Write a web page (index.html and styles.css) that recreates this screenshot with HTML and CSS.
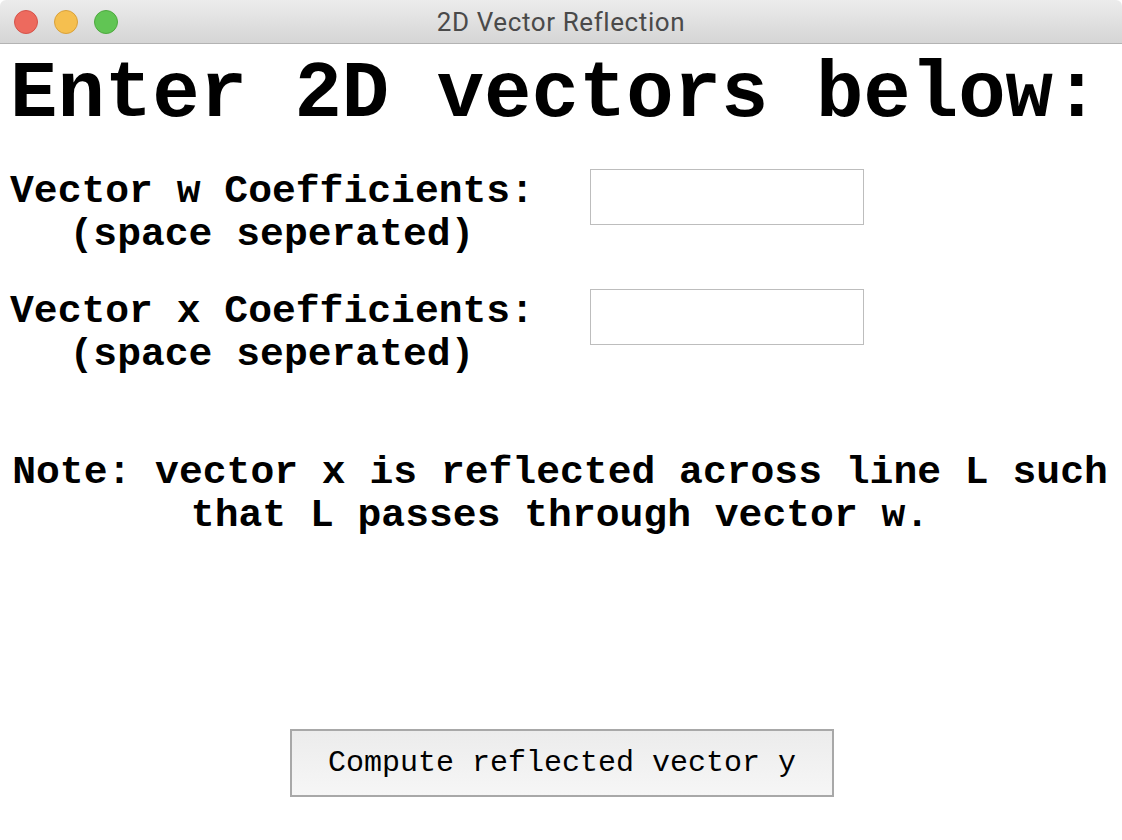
FILE: index.html
```html
<!DOCTYPE html>
<html>
<head>
<meta charset="utf-8">
<link rel="stylesheet" href="styles.css">
</head>
<body>
<div class="window">
  <div class="titlebar">
    <div class="lights">
      <span class="light red"></span>
      <span class="light yellow"></span>
      <span class="light green"></span>
    </div>
    <div class="title">2D Vector Reflection</div>
  </div>
  <div class="content">
    <h1 class="heading">Enter 2D vectors below:</h1>
    <div class="row">
      <div class="label">Vector w Coefficients:<br>(space seperated)</div>
      <input class="field" type="text">
    </div>
    <div class="row">
      <div class="label">Vector x Coefficients:<br>(space seperated)</div>
      <input class="field" type="text">
    </div>
    <p class="note">Note: vector x is reflected across line L such<br>that L passes through vector w.</p>
    <div class="actions">
      <button class="compute">Compute reflected vector y</button>
    </div>
  </div>
</div>
</body>
</html>
```
FILE: styles.css
```css
html, body {
  margin: 0;
  padding: 0;
  background: #ffffff;
}
.window {
  width: 1122px;
  height: 840px;
  background: #fff;
  overflow: hidden;
}
.titlebar {
  position: relative;
  height: 43px;
  background: linear-gradient(#ececec, #d5d5d5);
  border-bottom: 1px solid #b3b3b3;
  display: flex;
  align-items: center;
  justify-content: center;
  border-radius: 6px 6px 0 0;
}
.lights {
  position: absolute;
  left: 14px;
  top: 10px;
  display: flex;
  gap: 16px;
}
.light {
  width: 24px;
  height: 24px;
  border-radius: 50%;
  box-sizing: border-box;
}
.red { background: #ed6a5e; border: 1px solid #d5534a; }
.yellow { background: #f5bf4f; border: 1px solid #d9a13a; }
.green { background: #61c554; border: 1px solid #4ea93f; }
.title {
  font-family: Roboto, "Liberation Sans", sans-serif;
  font-size: 26px;
  letter-spacing: 0.6px;
  color: #4a4a4a;
  margin-top: 1px;
}
.content {
  padding: 0 0 0 10px;
  font-family: "Liberation Mono", "Courier New", monospace;
  color: #000;
}
.heading {
  margin: 0;
  padding-top: 6px;
  font-size: 79px;
  font-weight: bold;
  line-height: 90px;
  white-space: nowrap;
}
.row {
  display: flex;
  align-items: flex-start;
  gap: 56px;
  margin-top: 30px;
}
.row + .row {
  margin-top: 34px;
}
.label {
  font-size: 39.7px;
  font-weight: bold;
  line-height: 43px;
  text-align: center;
  white-space: nowrap;
}
.field {
  margin: 0;
  margin-top: -1px;
  width: 274px;
  height: 56px;
  box-sizing: border-box;
  border: 1px solid #bdbdbd;
  background: #fff;
  padding: 0 8px;
  font-family: "Liberation Mono", monospace;
  font-size: 20px;
  outline: none;
}
.note {
  margin: 75px 0 0 0;
  font-size: 39.7px;
  font-weight: bold;
  line-height: 43px;
  text-align: center;
  width: 1100px;
  white-space: nowrap;
}
.actions {
  display: flex;
  margin-top: 192px;
  padding-left: 280px;
}
.compute {
  width: 544px;
  height: 68px;
  margin: 0;
  border: 2px solid #a8a8a8;
  background: linear-gradient(#ececec, #f6f6f6);
  font-family: "Liberation Mono", monospace;
  font-size: 30px;
  color: #000;
  padding: 0;
}
```
